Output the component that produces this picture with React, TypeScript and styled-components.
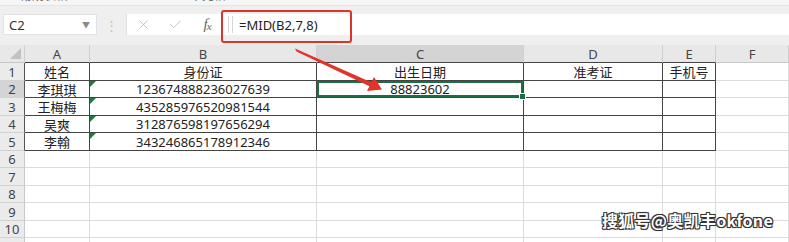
import styled, { createGlobalStyle } from "styled-components";
import { X, Check } from "lucide-react";

const GlobalStyle = createGlobalStyle`
  body {
    margin: 0;
    background: #fff;
    font-family: "Noto Sans", "Noto Sans CJK SC", sans-serif;
    overflow: hidden;
  }
`;

const columns = [
  { name: "A", width: 65 },
  { name: "B", width: 227 },
  { name: "C", width: 207 },
  { name: "D", width: 139 },
  { name: "E", width: 53 },
  { name: "F", width: 73 },
];

const data: string[][] = [
  ["姓名", "身份证", "出生日期", "准考证", "手机号"],
  ["李琪琪", "123674888236027639", "88823602", "", ""],
  ["王梅梅", "435285976520981544", "", "", ""],
  ["吴爽", "312876598197656294", "", "", ""],
  ["李翰", "343246865178912346", "", "", ""],
];

const rowHeights = [18, 17, 18, 17, 18, 17, 18, 17, 18, 17, 18];

const ribbonBits = [
  { w: 20, t: "" },
  { w: 56, t: "常规表格" },
  { w: 114, t: "3" },
  { w: 110, t: "单元格" },
  { w: 140, t: "4" },
  { w: 56, t: "5" },
  { w: 84, t: "AY" },
  { w: 84, t: "b" },
  { w: 40, t: "m" },
];

const Page = styled.div`
  position: relative;
  width: 789px;
  height: 242px;
  overflow: hidden;
`;

const RibbonEdge = styled.div`
  display: flex;
  align-items: flex-end;
  height: 6px;
  overflow: hidden;
  background: #f6f6f6;
  border-bottom: 1px solid #e4e4e4;
  box-sizing: border-box;
`;

const RibbonBit = styled.span<{ $w: number }>`
  flex: 0 0 ${(p) => p.$w}px;
  margin-bottom: 2px;
  font-size: 12px;
  line-height: 14px;
  color: #555;
  white-space: nowrap;
`;

const FormulaBar = styled.div`
  display: flex;
  align-items: flex-start;
  height: 39px;
  box-sizing: border-box;
  padding: 8px 0 10px 3px;
  background: #efefef;
`;

const NameBox = styled.div`
  display: flex;
  align-items: center;
  justify-content: space-between;
  width: 94px;
  height: 21px;
  box-sizing: border-box;
  padding: 0 6px 0 5px;
  background: #fff;
  border: 1px solid #e2e2e2;
  font-size: 13px;
  color: #333;
`;

const Caret = styled.span`
  font-size: 8px;
  color: #8a8a8a;
`;

const Grip = styled.div`
  display: flex;
  align-items: center;
  justify-content: center;
  width: 29px;
  height: 21px;
  color: #c4c4c4;
  font-size: 13px;
`;

const FormulaField = styled.div`
  display: flex;
  align-items: center;
  flex: 1;
  height: 21px;
  background: #fff;
  border-left: 1px solid #e2e2e2;
`;

const ToolSlot = styled.div`
  display: flex;
  align-items: center;
  justify-content: center;
  width: 32px;
  height: 21px;
  color: #b4b4b4;
`;

const Fx = styled.span`
  font-family: "Liberation Serif", serif;
  font-style: italic;
  font-size: 15px;
  color: #666;
  letter-spacing: -1px;
  sub {
    font-size: 11px;
    vertical-align: -1px;
  }
`;

const Divider = styled.div`
  width: 3px;
  height: 17px;
  margin: 0 4px 0 5px;
  border-left: 1px solid #d6d6d6;
  border-right: 1px solid #d6d6d6;
`;

const FormulaText = styled.span`
  padding-left: 2px;
  font-size: 13px;
  color: #222;
`;

const Highlight = styled.div`
  position: absolute;
  left: 221px;
  top: 10px;
  width: 131px;
  height: 33px;
  box-sizing: border-box;
  border: 2px solid #d9352d;
  border-radius: 3px;
`;

const Sheet = styled.div`
  display: grid;
  grid-template-columns: 25px ${columns.map((c) => c.width + "px").join(" ")};
  font-size: 13px;
  color: #222;
`;

const Corner = styled.div`
  position: relative;
  height: 18px;
  box-sizing: border-box;
  background: #e8e8e8;
  border-right: 1px solid #cfcfcf;
  border-bottom: 1px solid #c8c8c8;
  &::after {
    content: "";
    position: absolute;
    right: 3px;
    bottom: 3px;
    border-left: 11px solid transparent;
    border-bottom: 11px solid #c2c2c2;
  }
`;

const ColHead = styled.div<{ $selected?: boolean; $dark?: boolean }>`
  display: flex;
  align-items: center;
  justify-content: center;
  height: 18px;
  box-sizing: border-box;
  background: ${(p) => (p.$selected ? "#d4d4d4" : "#e8e8e8")};
  border-right: 1px solid #cfcfcf;
  border-bottom: 1px solid ${(p) => (p.$dark ? "#444" : "#c8c8c8")};
  color: #444;
  font-size: 13px;
`;

const RowHead = styled.div<{ $h: number; $selected?: boolean; $dark?: boolean }>`
  display: flex;
  align-items: center;
  justify-content: center;
  height: ${(p) => p.$h}px;
  box-sizing: border-box;
  background: ${(p) => (p.$selected ? "#d4d4d4" : "#ebebeb")};
  border-right: 1px solid ${(p) => (p.$dark ? "#555" : "#c8c8c8")};
  border-bottom: 1px solid #d2d2d2;
  color: #444;
  font-size: 13px;
`;

const Cell = styled.div<{
  $h: number;
  $boxed?: boolean;
  $selected?: boolean;
  $marker?: boolean;
}>`
  position: relative;
  display: flex;
  align-items: center;
  justify-content: center;
  height: ${(p) => p.$h}px;
  box-sizing: border-box;
  white-space: nowrap;
  border-right: 1px solid ${(p) => (p.$boxed ? "#444" : "#dcdcdc")};
  border-bottom: 1px solid ${(p) => (p.$boxed ? "#444" : "#dcdcdc")};
  box-shadow: ${(p) => (p.$selected ? "inset 0 0 0 2px #1f6e43" : "none")};

  &::before {
    content: "";
    display: ${(p) => (p.$marker ? "block" : "none")};
    position: absolute;
    left: 0;
    top: 0;
    border-top: 6px solid #1d7a3e;
    border-right: 6px solid transparent;
  }

  &::after {
    content: "";
    display: ${(p) => (p.$selected ? "block" : "none")};
    position: absolute;
    right: -3px;
    bottom: -3px;
    width: 5px;
    height: 5px;
    background: #1f6e43;
    border: 1px solid #fff;
    z-index: 2;
  }
`;

const Overlay = styled.svg`
  position: absolute;
  left: 0;
  top: 0;
  pointer-events: none;
`;

const Watermark = styled.div`
  position: absolute;
  right: 16px;
  bottom: 10px;
  font-family: "Noto Sans CJK SC", "Noto Sans", sans-serif;
  font-weight: 700;
  font-size: 16px;
  color: #fff;
  letter-spacing: 0.3px;
  text-shadow: -1px -1px 0 #333, 1px -1px 0 #333, -1px 1px 0 #333,
    1px 1px 0 #333, 0 0 2px #000;
`;

export default function App() {
  return (
    <Page>
      <GlobalStyle />
      <RibbonEdge>
        {ribbonBits.map((b, i) => (
          <RibbonBit key={i} $w={b.w}>
            {b.t}
          </RibbonBit>
        ))}
      </RibbonEdge>
      <FormulaBar>
        <NameBox>
          <span>C2</span>
          <Caret>▼</Caret>
        </NameBox>
        <Grip>⋮</Grip>
        <FormulaField>
          <ToolSlot>
            <X size={15} strokeWidth={1.3} />
          </ToolSlot>
          <ToolSlot>
            <Check size={15} strokeWidth={1.3} />
          </ToolSlot>
          <ToolSlot>
            <Fx>
              f<sub>x</sub>
            </Fx>
          </ToolSlot>
          <Divider />
          <FormulaText>=MID(B2,7,8)</FormulaText>
        </FormulaField>
      </FormulaBar>
      <Sheet>
        <Corner />
        {columns.map((c) => (
          <ColHead key={c.name} $selected={c.name === "C"} $dark={c.name !== "F"}>
            {c.name}
          </ColHead>
        ))}
        {rowHeights.map((h, r) => {
          const values = data[r] || [];
          const inTable = r < data.length;
          return [
            <RowHead key={`h${r}`} $h={h} $selected={r === 1} $dark={inTable}>
              {r + 1}
            </RowHead>,
            ...columns.map((c, ci) => (
              <Cell
                key={`${r}-${c.name}`}
                $h={h}
                $boxed={inTable && ci < 5}
                $selected={r === 1 && ci === 2}
                $marker={r >= 1 && inTable && ci === 1}
              >
                {values[ci] || ""}
              </Cell>
            )),
          ];
        })}
      </Sheet>
      <Highlight />
      <Overlay width="789" height="242" viewBox="0 0 789 242">
        <polygon points="295,48.5 296.5,51.5 372,87.5 374,83.5" fill="#e0332b" />
        <polygon points="382,89.5 367,91 374,77" fill="#e0332b" />
      </Overlay>
      <Watermark>搜狐号@奥凯丰okfone</Watermark>
    </Page>
  );
}
